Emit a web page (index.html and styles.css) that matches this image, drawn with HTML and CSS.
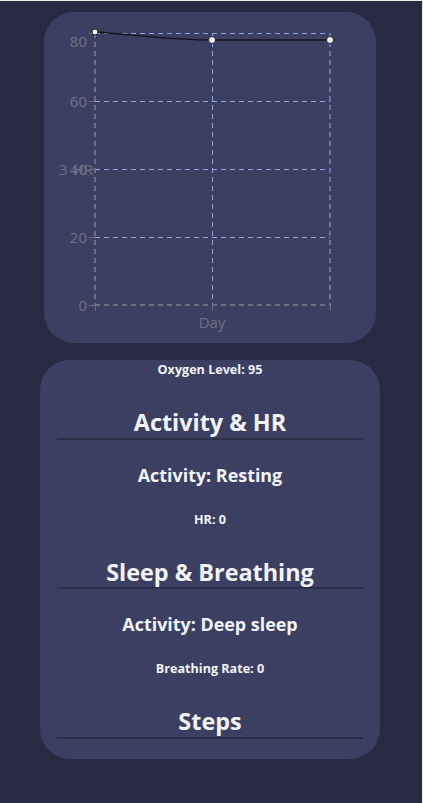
FILE: index.html
```html
<!DOCTYPE html>
<html>
<head>
<meta charset="utf-8">
<link rel="stylesheet" href="styles.css">
</head>
<body>
<div class="page">
  <div class="chart-card">
    <svg class="chart" width="332" height="331" viewBox="0 0 332 331">
      <g class="grid">
        <line x1="51" y1="21.5" x2="286" y2="21.5"/>
        <line x1="51" y1="89.5" x2="286" y2="89.5"/>
        <line x1="51" y1="157.5" x2="286" y2="157.5"/>
        <line x1="51" y1="225.5" x2="286" y2="225.5"/>
        <line x1="168.5" y1="21" x2="168.5" y2="293"/>
        <line class="edge" x1="286" y1="21" x2="286" y2="293"/>
      </g>
      <g class="axis">
        <line x1="51" y1="21" x2="51" y2="293"/>
        <line x1="51" y1="293" x2="286" y2="293"/>
      </g>
      <g class="ticks">
        <line x1="45" y1="21.5" x2="51" y2="21.5"/>
        <line x1="45" y1="89.5" x2="51" y2="89.5"/>
        <line x1="45" y1="157.5" x2="51" y2="157.5"/>
        <line x1="45" y1="225.5" x2="51" y2="225.5"/>
        <line x1="45" y1="293.5" x2="51" y2="293.5"/>
        <line x1="51.5" y1="293" x2="51.5" y2="299"/>
        <line x1="168.5" y1="293" x2="168.5" y2="299"/>
        <line x1="286.5" y1="293" x2="286.5" y2="299"/>
      </g>
      <g class="labels">
        <text x="43" y="35" text-anchor="end">80</text>
        <text x="43" y="95" text-anchor="end">60</text>
        <text x="43" y="163" text-anchor="end">40</text>
        <text x="15" y="163">3</text>
        <text x="49" y="163" text-anchor="end">HR</text>
        <text x="43" y="231" text-anchor="end">20</text>
        <text x="43" y="299" text-anchor="end">0</text>
        <text x="168" y="316" text-anchor="middle">Day</text>
      </g>
      <path class="series" d="M51,20 C95,23 130,28 168,28 L286,28"/>
      <g class="dots">
        <circle cx="51" cy="20" r="3"/>
        <circle cx="168" cy="28" r="3.5"/>
        <circle cx="286" cy="28" r="3.5"/>
      </g>
    </svg>
  </div>
  <div class="info-card">
    <h5 class="small first">Oxygen Level: 95</h5>
    <h2 class="section">Activity &amp; HR</h2>
    <h3 class="mid">Activity: Resting</h3>
    <h5 class="small">HR: 0</h5>
    <h2 class="section">Sleep &amp; Breathing</h2>
    <h3 class="mid">Activity: Deep sleep</h3>
    <h5 class="small">Breathing Rate: 0</h5>
    <h2 class="section">Steps</h2>
  </div>
</div>
</body>
</html>
```

FILE: styles.css
```css
html {
  background: #ececec;
}
body {
  margin: 1px 1px 0 0;
  min-height: 802px;
  background: #272a40;
  font-family: "Open Sans", "Noto Sans", sans-serif;
  color: #f3f4fb;
}
.page {
  width: 340px;
  margin-left: 40px;
  padding-top: 11px;
  display: flex;
  flex-direction: column;
}
.chart-card {
  margin: 0 4px;
  height: 331px;
  background: #3b4062;
  border-radius: 30px;
}
.chart {
  display: block;
}
.grid line {
  stroke: #8fa6e4;
  stroke-width: 1;
  stroke-dasharray: 5 4;
}
.grid line.edge {
  stroke: #7186c0;
  stroke-width: 1.5;
}
.axis line {
  stroke: #6c6f80;
  stroke-width: 2;
  stroke-dasharray: 5 4;
}
.ticks line {
  stroke: #6c6f80;
  stroke-width: 1;
}
.labels text {
  fill: #6e7182;
  font-family: "Open Sans", sans-serif;
  font-size: 15px;
}
.series {
  fill: none;
  stroke: #12131c;
  stroke-width: 1.3;
}
.dots circle {
  fill: #ffffff;
  stroke: #1b1d2a;
  stroke-width: 1;
}
.info-card {
  margin-top: 17px;
  height: 399px;
  box-sizing: border-box;
  padding: 0 17px;
  background: #3b4062;
  border-radius: 30px;
  display: flex;
  flex-direction: column;
  text-align: center;
}
.small {
  margin: 26px 0 0;
  font-size: 12.6px;
  line-height: 16px;
  font-weight: 700;
}
.small.first {
  margin-top: 2px;
}
.section {
  margin: 30px 0 0;
  font-size: 23.4px;
  line-height: 28px;
  font-weight: 700;
  padding-bottom: 1.5px;
  border-bottom: 2px solid #2c2f4a;
}
.mid {
  margin: 24px 0 0;
  font-size: 17.9px;
  line-height: 22px;
  font-weight: 700;
}
```
